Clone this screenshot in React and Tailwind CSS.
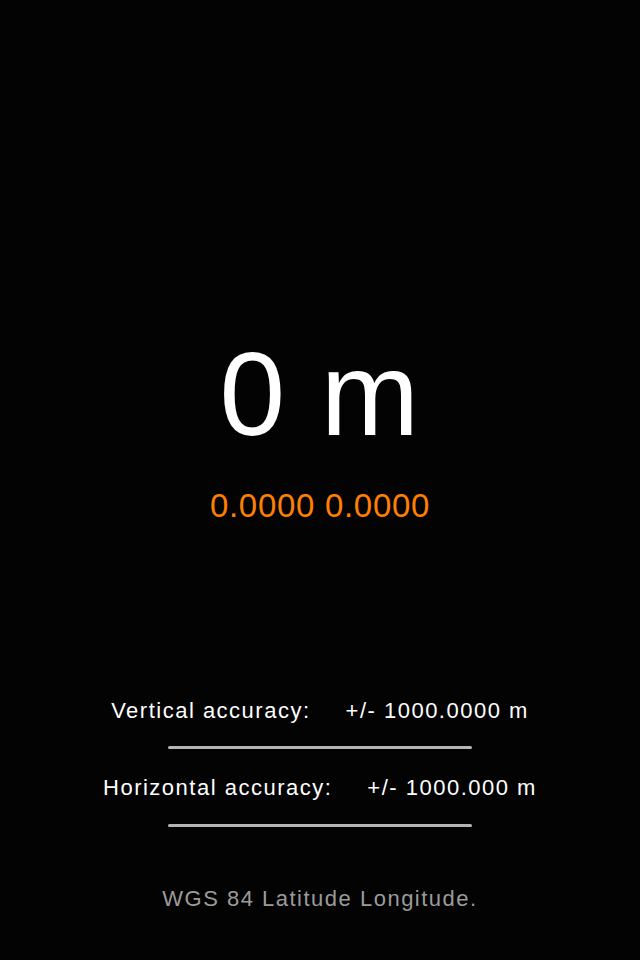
export default function App() {
  return (
    <div className="h-[960px] w-[640px] bg-[#030303] flex flex-col items-center font-['Liberation_Sans',Arial,sans-serif]">
      <div className="mt-[335px] text-[118px] leading-[118px] tracking-[1.5px] text-white">0 m</div>
      <div className="mt-[36px] text-[33px] leading-[33px] tracking-[0.7px] text-[#ff8000]">0.0000 0.0000</div>

      <div className="mt-[178px] flex gap-[35px] text-[22px] leading-[22px] tracking-[1.5px] text-white">
        <span>Vertical accuracy:</span>
        <span>+/- 1000.0000 m</span>
      </div>
      <div className="mt-[24px] h-[3px] w-[304px] rounded-full bg-[#b4b4b4]" />

      <div className="mt-[28px] flex gap-[35px] text-[22px] leading-[22px] tracking-[1.5px] text-white">
        <span>Horizontal accuracy:</span>
        <span>+/- 1000.000 m</span>
      </div>
      <div className="mt-[25px] h-[3px] w-[304px] rounded-full bg-[#b4b4b4]" />

      <div className="mt-[61px] text-[22px] leading-[22px] tracking-[1.5px] text-[#9b9b9b]">WGS 84 Latitude Longitude.</div>
    </div>
  );
}
